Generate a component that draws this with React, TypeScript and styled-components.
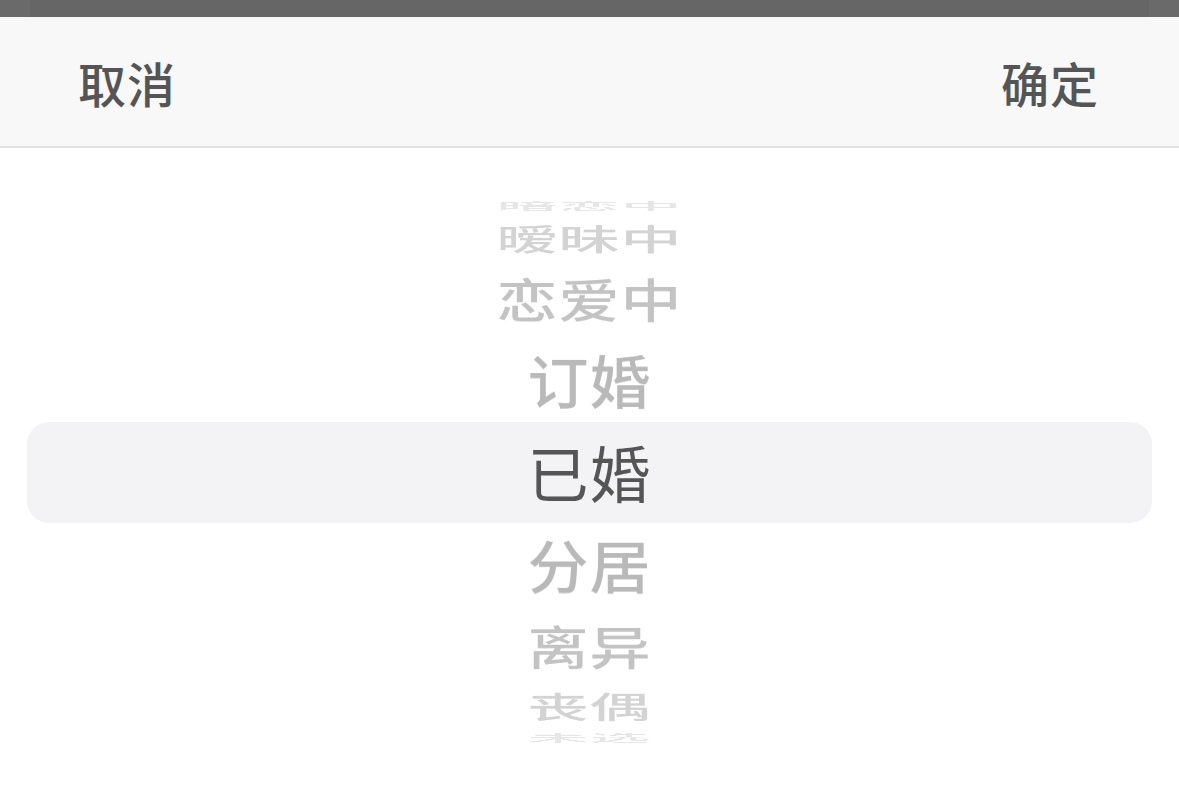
import React from 'react'
import styled, { createGlobalStyle } from 'styled-components'

const GlobalStyle = createGlobalStyle`
  html, body {
    margin: 0;
    padding: 0;
    background: #ffffff;
  }
  body {
    font-family: "Noto Sans CJK SC", "Noto Sans", sans-serif;
  }
`

const OPTIONS = ['单身', '暗恋中', '暧昧中', '恋爱中', '订婚', '已婚', '分居', '离异', '丧偶', '未选']
const SELECTED = 5
const STEP = 20
const RADIUS = 270

const shades = ['#555555', '#b9b9b9', '#c3c3c3', '#d3d3d3', '#e6e6e6']

const Page = styled.div`
  width: 1179px;
  height: 785px;
  display: flex;
  flex-direction: column;
  overflow: hidden;
  background: #ffffff;
`

const TopBar = styled.div`
  height: 17px;
  display: flex;
  justify-content: space-between;
  background: #666666;
`

const TopBarEdge = styled.div`
  width: 30px;
  background: #6a6a6a;
`

const Header = styled.div`
  height: 129px;
  display: flex;
  align-items: center;
  justify-content: space-between;
  padding: 0 80px 0 78px;
  background: #f8f8f8;
  border-bottom: 2px solid #e4e4e4;
`

const HeaderButton = styled.button`
  border: none;
  background: none;
  padding: 0;
  font-family: "Noto Sans CJK SC", sans-serif;
  font-size: 48px;
  font-weight: 500;
  color: #555555;
  letter-spacing: 1px;
  cursor: pointer;
`

const Picker = styled.div`
  flex: 1;
  padding-top: 274px;
`

const Band = styled.div`
  position: relative;
  height: 101px;
  margin: 0 27px;
  border-radius: 22px;
  background: #f3f3f5;
`

const Item = styled.div<{ $active: boolean; $color: string }>`
  position: absolute;
  left: 0;
  right: 0;
  top: -1px;
  height: 101px;
  display: flex;
  align-items: center;
  justify-content: center;
  font-family: "Noto Sans CJK SC", sans-serif;
  font-size: 61px;
  font-weight: ${(p) => (p.$active ? 400 : 500)};
  color: ${(p) => p.$color};
  letter-spacing: 1px;
  backface-visibility: hidden;
`

export default function App() {
  return (
    <Page>
      <GlobalStyle />
      <TopBar>
        <TopBarEdge />
        <TopBarEdge />
      </TopBar>
      <Header>
        <HeaderButton>取消</HeaderButton>
        <HeaderButton>确定</HeaderButton>
      </Header>
      <Picker>
        <Band>
          {OPTIONS.map((label, i) => {
            const offset = i - SELECTED
            if (Math.abs(offset) > 4) return null
            const angle = -offset * STEP
            return (
              <Item
                key={label}
                $active={offset === 0}
                $color={shades[Math.abs(offset)]}
                style={{ transform: `rotateX(${angle}deg) translateZ(${RADIUS}px)` }}
              >
                {label}
              </Item>
            )
          })}
        </Band>
      </Picker>
    </Page>
  )
}
